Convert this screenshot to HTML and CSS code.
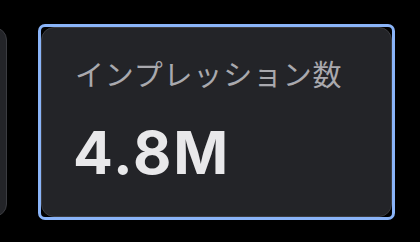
FILE: index.html
```html
<!DOCTYPE html>
<html lang="ja">
<head>
  <meta charset="UTF-8">
  <meta name="viewport" content="width=device-width, initial-scale=1.0">
  <title>Stats</title>
  <link rel="stylesheet" href="styles.css">
</head>
<body>
<div class="stats-row">
  <div class="stat-wrap">
    <div class="stat-card"></div>
  </div>
  <div class="stat-wrap selected">
    <div class="stat-card">
      <div class="stat-label">インプレッション数</div>
      <div class="stat-value">4.8M</div>
    </div>
  </div>
</div>
</body>
</html>
```

FILE: styles.css
```css
body {
  margin: 0;
  background-color: #000;
  width: 420px;
  height: 242px;
  overflow: hidden;
}

.stats-row {
  display: flex;
  gap: 28px;
  padding-top: 24px;
  margin-left: -347px;
}

.stat-wrap {
  flex: 0 0 auto;
  border: 3px solid transparent;
  border-radius: 7px;
}

.stat-wrap.selected {
  border-color: #8ab4f8;
}

.stat-card {
  box-sizing: border-box;
  width: 351px;
  height: 190px;
  padding: 31px 33px 0;
  background-color: #232428;
  border: 1px solid #3b3c41;
  border-radius: 13px;
}

.stat-label {
  font-family: "Noto Sans CJK JP", sans-serif;
  font-size: 29px;
  letter-spacing: 0.8px;
  line-height: 1;
  color: #a9a9ae;
}

.stat-value {
  margin: 35px 0 0 -2px;
  font-family: Inter, "Liberation Sans", sans-serif;
  font-size: 59px;
  font-weight: bold;
  letter-spacing: 2px;
  line-height: 1;
  color: #e8e8ea;
}
```
